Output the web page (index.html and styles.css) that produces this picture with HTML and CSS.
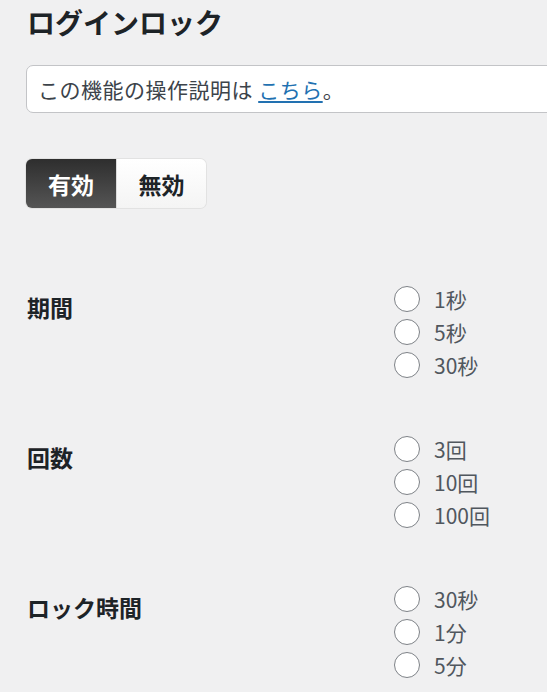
FILE: index.html
```html
<!DOCTYPE html>
<html lang="ja">
<head>
    <meta charset="UTF-8">
    <meta name="viewport" content="width=device-width, initial-scale=1.0">
    <title>ログインロック</title>
    <link rel="stylesheet" href="styles.css">
</head>
<body>
    <div class="wrap">
        <h1 class="page-title">ログインロック</h1>

        <!-- 説明ボックス -->
        <div class="notice">
            この機能の操作説明は <a href="#">こちら</a>。
        </div>

        <!-- 有効 / 無効 切り替え -->
        <div class="switch">
            <button type="button" class="switch-btn active">有効</button>
            <button type="button" class="switch-btn">無効</button>
        </div>

        <!-- 設定項目 -->
        <div class="settings">
            <div class="setting-row">
                <div class="setting-label">期間</div>
                <div class="setting-options">
                    <label class="option"><input type="radio" name="period"><span>1秒</span></label>
                    <label class="option"><input type="radio" name="period"><span>5秒</span></label>
                    <label class="option"><input type="radio" name="period"><span>30秒</span></label>
                </div>
            </div>

            <div class="setting-row">
                <div class="setting-label">回数</div>
                <div class="setting-options">
                    <label class="option"><input type="radio" name="count"><span>3回</span></label>
                    <label class="option"><input type="radio" name="count"><span>10回</span></label>
                    <label class="option"><input type="radio" name="count"><span>100回</span></label>
                </div>
            </div>

            <div class="setting-row">
                <div class="setting-label">ロック時間</div>
                <div class="setting-options">
                    <label class="option"><input type="radio" name="lock"><span>30秒</span></label>
                    <label class="option"><input type="radio" name="lock"><span>1分</span></label>
                    <label class="option"><input type="radio" name="lock"><span>5分</span></label>
                </div>
            </div>
        </div>
    </div>
</body>
</html>
```

FILE: styles.css
```css
/* 基本スタイル */
body {
    margin: 0;
    padding: 0;
    background-color: #f0f0f1;
    color: #3c434a;
    font-family: "Noto Sans CJK JP", "Noto Sans", sans-serif;
    overflow: hidden;
}

.wrap {
    padding-left: 26px;
}

/* タイトル */
.page-title {
    margin: 4px 0 0 1px;
    font-size: 28px;
    line-height: 36px;
    font-weight: bold;
    color: #1d2327;
}

/* 説明ボックス */
.notice {
    margin-top: 25px;
    margin-right: -20px;
    padding: 9px 11px;
    background-color: #fff;
    border: 1px solid #c3c4c7;
    border-radius: 7px;
    font-size: 21px;
    line-height: 28px;
    letter-spacing: 0.5px;
    color: #3c434a;
}

.notice a {
    color: #2271b1;
    text-decoration: underline;
    text-underline-offset: 3px;
}

/* 切り替えボタン */
.switch {
    display: flex;
    width: 180px;
    margin-top: 46px;
    border-radius: 6px;
    box-shadow: 0 0 0 1px #e2e2e2;
}

.switch-btn {
    width: 90px;
    height: 49px;
    padding: 0;
    border: none;
    font-family: inherit;
    font-size: 23px;
    font-weight: bold;
    color: #1d2327;
    background: linear-gradient(#ffffff, #f4f4f4);
    cursor: pointer;
}

.switch-btn:first-child {
    border-radius: 6px 0 0 6px;
}

.switch-btn:last-child {
    border-radius: 0 6px 6px 0;
    border-left: 1px solid #dcdcdc;
}

.switch-btn.active {
    color: #fff;
    background: linear-gradient(#2e2e2e, #555555);
}

/* 設定項目 */
.settings {
    margin-top: 74px;
    display: flex;
    flex-direction: column;
    gap: 51px;
}

.setting-row {
    display: flex;
}

.setting-label {
    width: 367px;
    padding-top: 10px;
    padding-left: 1px;
    font-size: 23px;
    line-height: 30px;
    font-weight: bold;
    color: #1d2327;
}

.setting-options {
    display: flex;
    flex-direction: column;
}

.option {
    display: flex;
    align-items: center;
    gap: 14px;
    height: 33px;
    font-size: 21px;
    color: #50575e;
}

.option input {
    appearance: none;
    margin: 0;
    width: 26px;
    height: 26px;
    border: 1px solid #7e8287;
    border-radius: 50%;
    background-color: #fff;
}
```
